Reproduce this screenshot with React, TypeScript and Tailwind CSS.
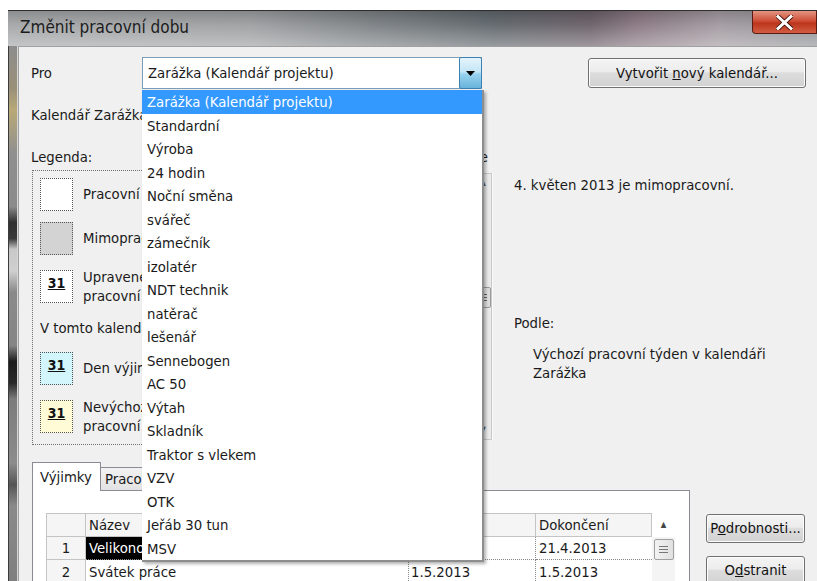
import React from "react";

const calendars = [
  "Zarážka (Kalendář projektu)",
  "Standardní",
  "Výroba",
  "24 hodin",
  "Noční směna",
  "svářeč",
  "zámečník",
  "izolatér",
  "NDT technik",
  "natěrač",
  "lešenář",
  "Sennebogen",
  "AC 50",
  "Výtah",
  "Skladník",
  "Traktor s vlekem",
  "VZV",
  "OTK",
  "Jeřáb 30 tun",
  "MSV",
];

function WinButton({
  children,
  className = "",
}: {
  children: React.ReactNode;
  className?: string;
}) {
  return (
    <div
      className={`flex items-center justify-center rounded-[3px] border border-[#707070] bg-[linear-gradient(to_bottom,#f4f4f4_0%,#ececec_45%,#dcdcdc_50%,#d2d2d2_100%)] text-[#111] shadow-[inset_0_0_0_1px_#fcfcfc] ${className}`}
    >
      <span className="whitespace-nowrap">{children}</span>
    </div>
  );
}

function LegendSquare({
  bg,
  day = false,
}: {
  bg: string;
  day?: boolean;
}) {
  return (
    <div
      className={`w-[33px] h-[33px] shrink-0 border border-dotted border-[#555] flex justify-center pt-[4px] ${bg}`}
    >
      {day && (
        <span className="font-bold underline text-[14px] leading-[16px] text-[#111]">
          31
        </span>
      )}
    </div>
  );
}

function App() {
  return (
    <div className="relative w-[817px] h-[581px] overflow-hidden bg-white font-['DejaVu_Sans_Condensed','DejaVu_Sans',sans-serif] text-[14.75px] text-[#1a1a1a]">
      <div className="ml-[8px] mt-[10px] h-[571px] flex flex-col">
        {/* title bar */}
        <div className="relative h-[36px] shrink-0 border-t border-[#2e2e2e] bg-[linear-gradient(to_right,#a4a6a8_0%,#9d9fa1_30%,#7b8084_45%,#5f666b_60%,#6a5f68_72%,#8a7882_78%,#a29aa0_88%,#8f9296_100%)]">
          <div className="absolute inset-0 bg-[linear-gradient(to_bottom,rgba(0,0,0,0.15)_0%,rgba(255,255,255,0.05)_40%,rgba(255,255,255,0.35)_100%)]" />
          <div className="relative flex h-full">
            <div className="pl-[12px] pt-[4px] text-[17px] leading-[24px] text-[#1c1c1c]">
              Změnit pracovní dobu
            </div>
            <div className="ml-auto w-[65px] h-[23px] rounded-bl-[4px] border border-t-0 border-[#5a1c12] bg-[linear-gradient(to_bottom,#e39482_0%,#cf4f36_45%,#bb351b_55%,#d25d43_100%)] flex items-center justify-center">
              <svg width="17" height="15" viewBox="0 0 17 15">
                <path
                  d="M2 1.5 L15 13.5 M15 1.5 L2 13.5"
                  stroke="#3b0d05"
                  strokeWidth="4.6"
                  strokeLinecap="square"
                />
                <path
                  d="M2 1.5 L15 13.5 M15 1.5 L2 13.5"
                  stroke="#ffffff"
                  strokeWidth="3"
                  strokeLinecap="square"
                />
              </svg>
            </div>
          </div>
        </div>

        <div className="flex flex-1 min-h-0">
          {/* left window frame */}
          <div className="w-[10px] shrink-0 border-l border-[#3c3c3c] border-r border-r-[#d6d6d6] bg-[linear-gradient(to_bottom,#8d8d8d_0%,#9a9078_8%,#b9a977_12%,#8f8f8f_20%,#8b8b8b_30%,#303030_33%,#3a3a3a_36%,#c8c8c8_38%,#d0d0d0_42%,#8a8a8a_46%,#858585_56%,#1c1c1c_59%,#2a2a2a_63%,#7c7c7c_66%,#8c8c8c_78%,#555555_82%,#8a8a8a_86%,#7f7f7f_100%)]" />

          {/* client area */}
          <div className="flex-1 min-w-0 border-t border-l border-[#a0a0a0] bg-[#f0f0f0] pt-[10px]">
            <div className="flex">
              <div className="w-[123px] pl-[12px] leading-[32px]">Pro</div>
              <div className="w-[340px] h-[32px] flex border border-[#7a9cb8] bg-white">
                <div className="flex-1 pl-[5px] leading-[30px]">
                  Zarážka (Kalendář projektu)
                </div>
                <div className="w-[23px] -my-[1px] -mr-[1px] border border-[#3c7fb1] rounded-[2px] bg-[linear-gradient(to_bottom,#e5f4fc_0%,#c4e5f6_45%,#98d1ef_55%,#68b3db_100%)] flex items-center justify-center">
                  <svg width="9" height="5" viewBox="0 0 9 5">
                    <path d="M0 0 H9 L4.5 5 Z" fill="#000" />
                  </svg>
                </div>
              </div>
              <WinButton className="ml-[106px] mt-[1px] w-[218px] h-[30px]">
                Vytvořit <span className="underline">n</span>ový kalendář...
              </WinButton>
            </div>

            <div className="mt-[17px] pl-[12px] leading-[18px]">
              Kalendář Zarážka je základní kalendář.
            </div>

            {/* legend, calendar, details */}
            <div className="mt-[24px] flex">
              <div className="w-[171px] shrink-0 pl-[12px]">
                <div className="leading-[18px]">Legenda:</div>
                <div className="mt-[4px] ml-[1px] h-[275px] border border-dotted border-[#707070] pl-[7px] pt-[7px]">
                  <div className="flex items-center gap-[10px]">
                    <LegendSquare bg="bg-white" />
                    <span>Pracovní</span>
                  </div>
                  <div className="mt-[11px] flex items-center gap-[10px]">
                    <LegendSquare bg="bg-[#d3d3d3]" />
                    <span>Mimopracovní</span>
                  </div>
                  <div className="mt-[12px] flex items-center gap-[10px]">
                    <LegendSquare bg="bg-white" day />
                    <span className="leading-[19px]">
                      Upravené
                      <br />
                      pracovní dny
                    </span>
                  </div>
                  <div className="mt-[14px] leading-[18px]">V tomto kalendáři:</div>
                  <div className="mt-[15px] flex items-center gap-[10px]">
                    <LegendSquare bg="bg-[#d2f6fb]" day />
                    <span>Den výjimky</span>
                  </div>
                  <div className="mt-[12px] flex items-center gap-[10px]">
                    <LegendSquare bg="bg-[#fffbd6]" day />
                    <span className="leading-[19px]">
                      Nevýchozí
                      <br />
                      pracovní týden
                    </span>
                  </div>
                </div>
              </div>

              <div className="w-[302px] shrink-0">
                <div className="pr-[4px] text-right whitespace-nowrap leading-[18px]">
                  Klikněte na den v tabulce
                </div>
                <div className="mt-[7px] ml-[10px] h-[267px] flex border border-[#c8c8c8] bg-white">
                  <div className="flex-1" />
                  <div className="w-[17px] flex flex-col items-center bg-[#eaeaea] border-l border-[#dcdcdc]">
                    <span className="mt-[4px] text-[8px] leading-[10px] text-[#555]">▲</span>
                    <div className="mt-[99px] w-[15px] h-[21px] rounded-[2px] border border-[#9a9a9a] bg-[linear-gradient(to_right,#f0f0f0,#dcdcdc)] flex flex-col items-center justify-center gap-[2px]">
                      <div className="w-[7px] h-px bg-[#666]" />
                      <div className="w-[7px] h-px bg-[#666]" />
                      <div className="w-[7px] h-px bg-[#666]" />
                    </div>
                    <span className="mt-auto mb-[4px] text-[8px] leading-[10px] text-[#555]">▼</span>
                  </div>
                </div>
              </div>

              <div className="flex-1 mt-[25px] h-[267px] border-l border-[#fafafa] pl-[21px] pt-[3px]">
                <div className="leading-[18px]">4. květen 2013 je mimopracovní.</div>
                <div className="mt-[120px] leading-[18px]">Podle:</div>
                <div className="mt-[12px] pl-[19px] leading-[19px]">
                  Výchozí pracovní týden v kalendáři
                  <br />
                  Zarážka
                </div>
              </div>
            </div>

            {/* exceptions tabs */}
            <div className="mt-[17px] flex pl-[13px]">
              <div className="w-[658px] shrink-0">
                <div className="flex items-end h-[28px]">
                  <div className="relative z-10 h-[29px] -mb-[1px] w-[69px] border border-b-0 border-[#898c95] bg-white pl-[7px] leading-[27px]">
                    Výjimky
                  </div>
                  <div className="h-[23px] w-[110px] border border-l-0 border-b-0 border-[#898c95] bg-[linear-gradient(to_bottom,#f2f2f2,#e3e3e3)] pl-[4px] leading-[22px] whitespace-nowrap">
                    Pracovní týdny
                  </div>
                </div>
                <div className="h-[100px] border border-[#898c95] bg-white pl-[13px] pt-[22px]">
                  <div className="grid grid-cols-[40px_323px_127px_116px_23px] w-[629px]">
                    <div className="h-[24px] border border-[#c4c4c4] bg-[#f5f5f5]" />
                    <div className="h-[24px] border border-l-0 border-[#c4c4c4] bg-[#f5f5f5] pl-[3px] leading-[22px]">
                      Název
                    </div>
                    <div className="h-[24px] border border-l-0 border-[#c4c4c4] bg-[#f5f5f5] pl-[3px] leading-[22px]">
                      Zahájení
                    </div>
                    <div className="h-[24px] border border-l-0 border-[#c4c4c4] bg-[#f5f5f5] pl-[3px] leading-[22px]">
                      Dokončení
                    </div>
                    <div className="h-[24px] flex items-center justify-center text-[8px] text-[#444]">
                      ▲
                    </div>

                    <div className="h-[23px] border border-t-0 border-[#c4c4c4] bg-[#f5f5f5] text-center leading-[22px]">
                      1
                    </div>
                    <div className="h-[23px] bg-black text-white pl-[3px] leading-[22px] border-b border-dotted border-[#888]">
                      Velikonoce
                    </div>
                    <div className="h-[23px] pl-[3px] leading-[22px] border-b border-r border-dotted border-[#888]">
                      29.3.2013
                    </div>
                    <div className="h-[23px] pl-[3px] leading-[22px] border-b border-dotted border-[#888]">
                      21.4.2013
                    </div>
                    <div className="h-[23px] flex items-start justify-center bg-[#f4f4f4]">
                      <div className="mt-[2px] w-[20px] h-[21px] rounded-[2px] border border-[#a0a0a0] bg-[linear-gradient(to_right,#f3f3f3,#e0e0e0)] flex flex-col items-center justify-center gap-[2px]">
                        <div className="w-[9px] h-px bg-[#777]" />
                        <div className="w-[9px] h-px bg-[#777]" />
                        <div className="w-[9px] h-px bg-[#777]" />
                      </div>
                    </div>

                    <div className="h-[23px] border border-t-0 border-[#c4c4c4] bg-[#f5f5f5] text-center leading-[23px]">
                      2
                    </div>
                    <div className="h-[23px] pl-[3px] leading-[23px] border-r border-dotted border-[#888]">
                      Svátek práce
                    </div>
                    <div className="h-[23px] pl-[2px] leading-[23px] border-r border-dotted border-[#888]">
                      1.5.2013
                    </div>
                    <div className="h-[23px] pl-[3px] leading-[23px]">1.5.2013</div>
                    <div className="h-[23px] bg-[#f4f4f4]" />
                  </div>
                </div>
              </div>

              <div className="ml-[16px] pt-[52px] flex flex-col gap-[13px]">
                <WinButton className="w-[99px] h-[29px]">
                  P<span className="underline">o</span>drobnosti...
                </WinButton>
                <WinButton className="w-[99px] h-[29px]">
                  O<span className="underline">d</span>stranit
                </WinButton>
              </div>
            </div>
          </div>
        </div>
      </div>

      {/* open calendar list */}
      <div className="absolute left-[142px] top-[90px] w-[342px] bg-white border-r-2 border-b-2 border-[#8e8e8e] shadow-[2px_2px_3px_rgba(0,0,0,0.3)]">
        {calendars.map((name, i) => (
          <div
            key={name}
            className={`h-[23.5px] pl-[5px] leading-[23px] whitespace-nowrap ${
              i === 0 ? "bg-[#3399ff] text-white" : "text-[#1a1a1a]"
            }`}
          >
            {name}
          </div>
        ))}
      </div>
    </div>
  );
}

export default App;
